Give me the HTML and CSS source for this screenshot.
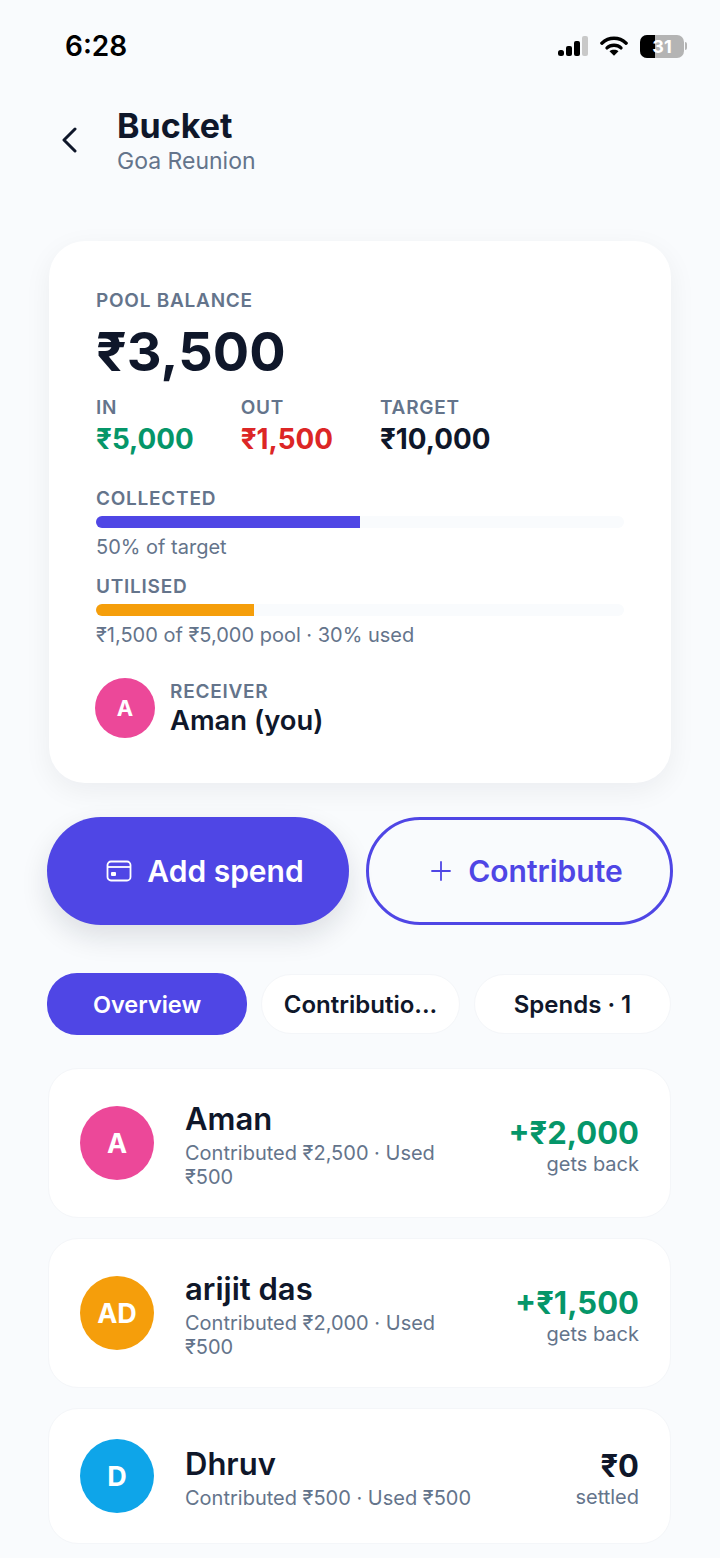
FILE: index.html
```html
<!DOCTYPE html>
<html lang="en">
  <head>
    <meta charset="UTF-8" />
    <meta name="viewport" content="width=device-width, initial-scale=1.0" />
    <title>Bucket - Goa Reunion</title>
    <link rel="stylesheet" href="styles.css">
  </head>
  <body>
    <div class="status-bar">
      <span class="status-time">6:28</span>
      <div class="status-icons">
        <svg class="status-signal" width="30" height="21" viewBox="0 0 30 21">
          <rect x="0" y="14" width="6" height="6" rx="2.5" fill="#000" />
          <rect x="8" y="10" width="6" height="10" rx="2" fill="#000" />
          <rect x="16" y="5" width="6" height="15" rx="2" fill="#000" />
          <rect x="24" y="0" width="6" height="20" rx="2" fill="#c9c9c9" />
        </svg>
        <svg class="status-wifi" width="28" height="22" viewBox="0 0 30 22">
          <path d="M2 8 C9.5 1 20.5 1 28 8" fill="none" stroke="#000" stroke-width="3.6" stroke-linecap="round" />
          <path d="M7.5 13 C11.5 9.3 18.5 9.3 22.5 13" fill="none" stroke="#000" stroke-width="3.6" stroke-linecap="round" />
          <path d="M15 21.5 L10.2 16.6 C12.8 14.6 17.2 14.6 19.8 16.6 Z" fill="#000" />
        </svg>
        <div class="battery">
          <div class="battery-body"><span class="battery-level"></span><span class="battery-text">31</span></div>
          <span class="battery-tip"></span>
        </div>
      </div>
    </div>

    <header class="page-header">
      <svg class="back-icon" width="16" height="26" viewBox="0 0 16 26">
        <path d="M14 2 L3 13 L14 24" fill="none" stroke="#0f172a" stroke-width="3" stroke-linecap="round" stroke-linejoin="round" />
      </svg>
      <div>
        <h1 class="page-title">Bucket</h1>
        <div class="page-subtitle">Goa Reunion</div>
      </div>
    </header>

    <section class="pool-card">
      <div class="label">POOL BALANCE</div>
      <div class="pool-amount">₹3,500</div>
      <div class="pool-stats">
        <div>
          <div class="label">IN</div>
          <div class="stat-value green">₹5,000</div>
        </div>
        <div>
          <div class="label">OUT</div>
          <div class="stat-value red">₹1,500</div>
        </div>
        <div>
          <div class="label">TARGET</div>
          <div class="stat-value">₹10,000</div>
        </div>
      </div>

      <div class="progress-block progress-first">
        <div class="label">COLLECTED</div>
        <div class="progress-track"><div class="progress-fill indigo" style="width: 50%"></div></div>
        <div class="progress-note">50% of target</div>
      </div>
      <div class="progress-block">
        <div class="label">UTILISED</div>
        <div class="progress-track"><div class="progress-fill amber" style="width: 30%"></div></div>
        <div class="progress-note">₹1,500 of ₹5,000 pool · 30% used</div>
      </div>

      <div class="receiver">
        <div class="avatar avatar-small pink">A</div>
        <div>
          <div class="label">RECEIVER</div>
          <div class="receiver-name">Aman (you)</div>
        </div>
      </div>
    </section>

    <div class="actions">
      <button class="action-btn action-primary">
        <svg width="26" height="22" viewBox="0 0 26 22">
          <rect x="1.5" y="1.5" width="23" height="19" rx="3.5" fill="none" stroke="#fff" stroke-width="1.8" />
          <line x1="1.5" y1="7" x2="24.5" y2="7" stroke="#fff" stroke-width="1.8" />
          <rect x="5" y="12" width="5" height="4" rx="1" fill="#fff" />
        </svg>
        Add spend
      </button>
      <button class="action-btn action-outline">
        <svg width="20" height="20" viewBox="0 0 20 20">
          <path d="M10 1 V19 M1 10 H19" fill="none" stroke="#4f46e5" stroke-width="1.8" stroke-linecap="round" />
        </svg>
        Contribute
      </button>
    </div>

    <nav class="tabs">
      <div class="tab tab-active">Overview</div>
      <div class="tab">Contributio...</div>
      <div class="tab">Spends · 1</div>
    </nav>

    <div class="member-list">
      <article class="member-row">
        <div class="avatar pink">A</div>
        <div class="member-info">
          <div class="member-name">Aman</div>
          <div class="member-detail">Contributed ₹2,500 · Used ₹500</div>
        </div>
        <div class="member-result">
          <div class="member-amount green">+₹2,000</div>
          <div class="member-status">gets back</div>
        </div>
      </article>
      <article class="member-row">
        <div class="avatar amber">AD</div>
        <div class="member-info">
          <div class="member-name">arijit das</div>
          <div class="member-detail">Contributed ₹2,000 · Used ₹500</div>
        </div>
        <div class="member-result">
          <div class="member-amount green">+₹1,500</div>
          <div class="member-status">gets back</div>
        </div>
      </article>
      <article class="member-row">
        <div class="avatar sky">D</div>
        <div class="member-info">
          <div class="member-name">Dhruv</div>
          <div class="member-detail">Contributed ₹500 · Used ₹500</div>
        </div>
        <div class="member-result">
          <div class="member-amount">₹0</div>
          <div class="member-status">settled</div>
        </div>
      </article>
    </div>
  </body>
</html>
```

FILE: styles.css
```css
* {
  box-sizing: border-box;
}
body {
  margin: 0;
  height: 1558px;
  overflow: hidden;
  padding: 0 47px;
  background-color: #f9fbfd;
  color: #0f172a;
  font-family: Inter, "Noto Sans", sans-serif;
}

/* status bar */
.status-bar {
  display: flex;
  justify-content: space-between;
  align-items: center;
  height: 34px;
  margin: 29px -14px 0 0;
  padding-left: 18px;
}
.status-time {
  font-size: 28px;
  font-weight: 600;
  color: #000;
}
.status-icons {
  display: flex;
  align-items: center;
  gap: 12px;
}
.battery {
  display: flex;
  align-items: center;
  gap: 1px;
}
.battery-body {
  position: relative;
  display: flex;
  justify-content: center;
  align-items: center;
  width: 44px;
  height: 23px;
  border-radius: 7px;
  overflow: hidden;
  background-color: #b4b4b4;
}
.battery-level {
  position: absolute;
  left: 0;
  top: 0;
  bottom: 0;
  width: 15px;
  background-color: #000;
}
.battery-text {
  position: relative;
  font-size: 18px;
  font-weight: 700;
  color: #fff;
}
.battery-tip {
  width: 2px;
  height: 8px;
  border-radius: 0 2px 2px 0;
  background-color: #b4b4b4;
}

/* header */
.page-header {
  display: flex;
  align-items: center;
  gap: 40px;
  margin-top: 41px;
  padding-left: 14px;
}
.page-title {
  margin: 0;
  font-size: 34px;
  line-height: 44px;
  font-weight: 700;
}
.page-subtitle {
  margin-top: -2px;
  font-size: 23px;
  line-height: 30px;
  color: #64748b;
}

/* pool card */
.pool-card {
  margin: 65px 2px 0;
  padding: 48px 47px 0;
  height: 542px;
  background-color: #fff;
  border-radius: 36px;
  box-shadow: 0 8px 28px rgba(15, 23, 42, 0.06);
}
.label {
  font-size: 19px;
  line-height: 24px;
  font-weight: 600;
  letter-spacing: 0.75px;
  color: #64748b;
}
.pool-amount {
  margin-top: 8px;
  font-size: 54px;
  line-height: 62px;
  font-weight: 700;
}
.pool-stats {
  display: flex;
  gap: 47px;
  margin-top: 13px;
}
.stat-value {
  margin-top: 2px;
  font-size: 27.8px;
  line-height: 34px;
  font-weight: 700;
}
.green {
  color: #059669;
}
.red {
  color: #dc2626;
}
.progress-first {
  margin-top: 31px;
}
.progress-block + .progress-block {
  margin-top: 15px;
}
.progress-track {
  height: 12px;
  margin-top: 5px;
  border-radius: 6px;
  background-color: #f9fbfd;
}
.progress-fill {
  height: 100%;
  border-radius: 6px 0 0 6px;
}
.progress-fill.indigo {
  background-color: #4f46e5;
}
.progress-fill.amber {
  background-color: #f59e0b;
}
.progress-note {
  margin-top: 6px;
  font-size: 20px;
  line-height: 26px;
  color: #64748b;
}
.receiver {
  display: flex;
  align-items: center;
  gap: 15px;
  margin: 30px 0 0 -1px;
}
.receiver-name {
  font-size: 27.4px;
  line-height: 32px;
  font-weight: 600;
}

/* avatars */
.avatar {
  display: flex;
  justify-content: center;
  align-items: center;
  flex-shrink: 0;
  width: 74px;
  height: 74px;
  border-radius: 50%;
  font-size: 27px;
  font-weight: 700;
  color: #fff;
}
.avatar-small {
  width: 60px;
  height: 60px;
  font-size: 22px;
}
.avatar.pink {
  background-color: #ec4899;
}
.avatar.amber {
  background-color: #f59e0b;
}
.avatar.sky {
  background-color: #0ea5e9;
}

/* action buttons */
.actions {
  display: grid;
  grid-template-columns: 302fr 307fr;
  gap: 17px;
  margin-top: 34px;
}
.action-btn {
  display: flex;
  justify-content: center;
  align-items: center;
  gap: 17px;
  height: 108px;
  border-radius: 54px;
  font-family: inherit;
  font-size: 30px;
  font-weight: 600;
}
.action-primary {
  gap: 15px;
  padding: 0 0 0 14px;
  border: none;
  background-color: #4f46e5;
  color: #fff;
  box-shadow: 0 12px 28px rgba(15, 23, 42, 0.12);
}
.action-outline {
  padding: 0 0 0 15px;
  border: 3px solid #4f46e5;
  background-color: transparent;
  color: #4f46e5;
}

/* tabs */
.tabs {
  display: grid;
  grid-template-columns: 200px 199px 197px;
  justify-content: space-between;
  margin: 48px 2px 0 0;
}
.tab {
  display: flex;
  justify-content: center;
  align-items: center;
  height: 60px;
  margin-top: 1px;
  border: 1px solid #f4f6f9;
  border-radius: 30px;
  background-color: #fff;
  font-size: 24px;
  font-weight: 600;
}
.tab-active {
  height: 62px;
  margin-top: 0;
  border: none;
  background-color: #4f46e5;
  color: #fff;
  font-size: 23.5px;
}

/* member rows */
.member-list {
  display: flex;
  flex-direction: column;
  gap: 20px;
  margin: 33px 2px 0 1px;
}
.member-row {
  display: flex;
  align-items: center;
  gap: 24px;
  padding: 28px 31px;
  border: 1px solid #f4f6f9;
  border-radius: 30px;
  background-color: #fff;
}
.member-row .avatar {
  margin: 2px 0;
}
.member-info {
  flex: 1;
  min-width: 0;
  max-width: 295px;
  margin-left: 7px;
  padding-top: 3px;
}
.member-name {
  font-size: 31px;
  line-height: 38px;
  font-weight: 600;
}
.member-detail {
  margin-top: 3px;
  font-size: 20px;
  line-height: 24px;
  color: #64748b;
}
.member-result {
  flex-shrink: 0;
  margin-left: auto;
  padding-top: 2px;
  text-align: right;
}
.member-amount {
  font-size: 31px;
  line-height: 40px;
  font-weight: 700;
}
.member-status {
  margin-top: -1px;
  font-size: 20px;
  line-height: 24px;
  color: #64748b;
}
```
